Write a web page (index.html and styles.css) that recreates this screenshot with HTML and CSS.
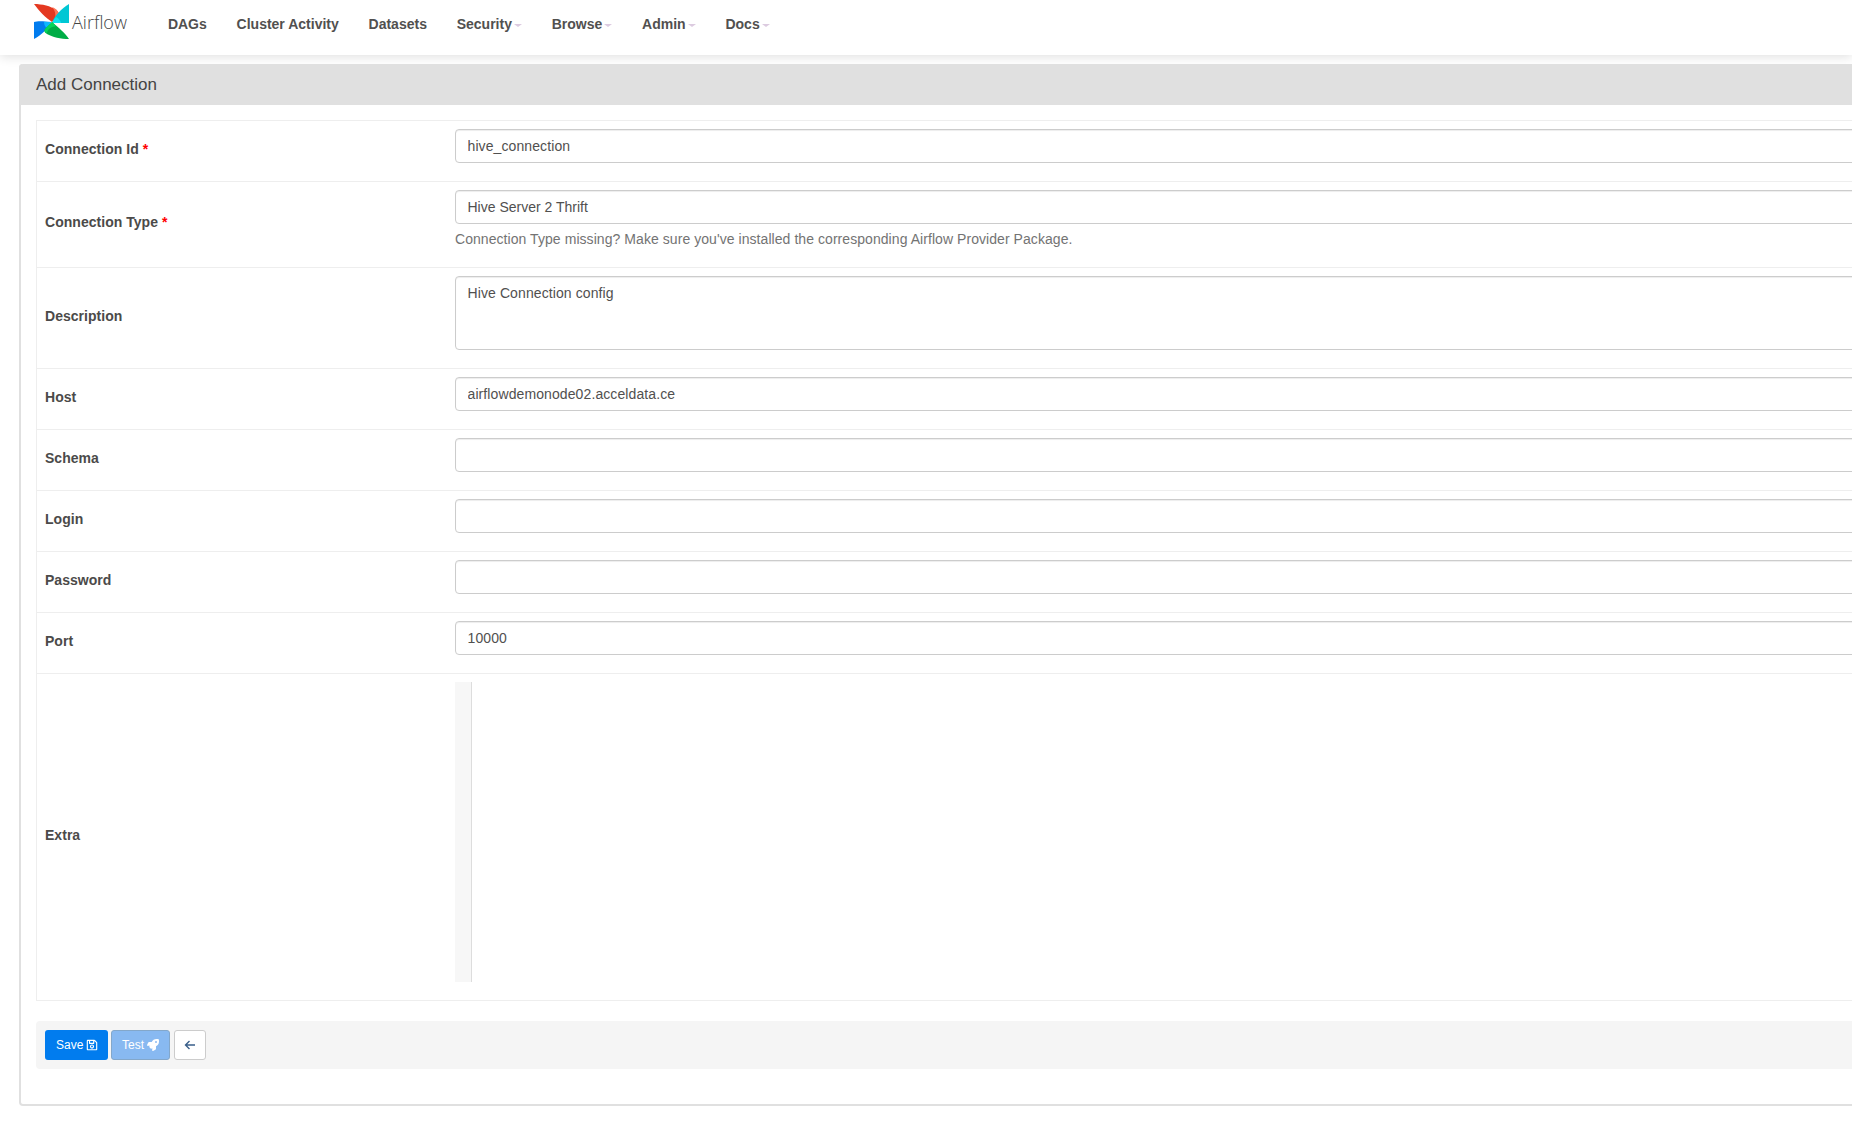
FILE: index.html
```html
<!DOCTYPE html>
<html lang="en">
<head>
    <meta charset="UTF-8">
    <title>Airflow - Add Connection</title>
    <link rel="stylesheet" href="styles.css">
</head>
<body>
    <nav class="navbar">
        <a class="brand" href="#">
            <svg class="brand-logo" viewBox="0 0 36 36" width="36" height="36">
                <path fill="#e43921" d="M0 0 C8 0 17 2 22 6 C25 8 25 10 25 11 L18 18 C12 14 5 7 0 0Z"/>
                <path fill="#ff7557" d="M18 3 C23 5 25 8 25 11 L21 15 C22 10 21 6 18 3Z"/>
                <path fill="#00c7d4" d="M35 0 L35 19 L18 19 C20 12 28 4 35 0Z"/>
                <path fill="#11e1ee" d="M18 19 L27 19 C27 17 24 14 22 13 C20 15 19 17 18 19Z"/>
                <path fill="#017cee" d="M0 35 L0 18 C3 17 9 17 17 18 C14 25 7 31 0 35Z"/>
                <path fill="#0cb6ff" d="M10 18 L17 18 C16 21 14 23 13 24 C11 23 10 20 10 18Z"/>
                <path fill="#00ad46" d="M35 35 C27 35 18 33 13 30 C10 28 10 27 11 25 L18 18 C24 23 31 29 35 35Z"/>
                <path fill="#04d659" d="M11 25 L18 18 C20 20 21 21 22 22 C18 23 14 24 13 29 C11 28 10 27 11 25Z"/>
            </svg>
            <span class="brand-name">Airflow</span>
        </a>
        <ul class="nav-links">
            <li><a href="#">DAGs</a></li>
            <li><a href="#">Cluster Activity</a></li>
            <li><a href="#">Datasets</a></li>
            <li><a href="#">Security<span class="caret"></span></a></li>
            <li><a href="#">Browse<span class="caret"></span></a></li>
            <li><a href="#">Admin<span class="caret"></span></a></li>
            <li><a href="#">Docs<span class="caret"></span></a></li>
        </ul>
    </nav>

    <div class="panel">
        <div class="panel-heading">Add Connection</div>
        <div class="panel-body">
            <form class="form-table">
                <div class="form-row">
                    <label for="conn_id">Connection Id <span class="required">*</span></label>
                    <div class="field"><input type="text" id="conn_id" value="hive_connection"></div>
                </div>
                <div class="form-row">
                    <label>Connection Type <span class="required">*</span></label>
                    <div class="field">
                        <div class="select-box">Hive Server 2 Thrift</div>
                        <p class="help-text">Connection Type missing? Make sure you've installed the corresponding Airflow Provider Package.</p>
                    </div>
                </div>
                <div class="form-row">
                    <label for="description">Description</label>
                    <div class="field"><textarea id="description">Hive Connection config</textarea></div>
                </div>
                <div class="form-row">
                    <label for="host">Host</label>
                    <div class="field"><input type="text" id="host" value="airflowdemonode02.acceldata.ce"></div>
                </div>
                <div class="form-row">
                    <label for="schema">Schema</label>
                    <div class="field"><input type="text" id="schema"></div>
                </div>
                <div class="form-row">
                    <label for="login">Login</label>
                    <div class="field"><input type="text" id="login"></div>
                </div>
                <div class="form-row">
                    <label for="password">Password</label>
                    <div class="field"><input type="password" id="password"></div>
                </div>
                <div class="form-row">
                    <label for="port">Port</label>
                    <div class="field"><input type="text" id="port" value="10000"></div>
                </div>
                <div class="form-row">
                    <label>Extra</label>
                    <div class="field"><div class="code-editor"><div class="gutter"></div></div></div>
                </div>
            </form>

            <div class="well">
                <button type="button" class="btn btn-primary">Save
                    <svg class="icon" viewBox="0 0 448 512"><path d="M433.941 129.941l-83.882-83.882A48 48 0 0 0 316.118 32H48C21.49 32 0 53.49 0 80v352c0 26.51 21.49 48 48 48h352c26.51 0 48-21.49 48-48V163.882a48 48 0 0 0-14.059-33.941zM272 80v80H144V80h128zm122 352H54a6 6 0 0 1-6-6V86a6 6 0 0 1 6-6h42v104c0 13.255 10.745 24 24 24h176c13.255 0 24-10.745 24-24V83.882l78.243 78.243a6 6 0 0 1 1.757 4.243V426a6 6 0 0 1-6 6zM224 232c-48.523 0-88 39.477-88 88s39.477 88 88 88 88-39.477 88-88-39.477-88-88-88zm0 128c-22.056 0-40-17.944-40-40s17.944-40 40-40 40 17.944 40 40-17.944 40-40 40z"/></svg>
                </button>
                <button type="button" class="btn btn-test">Test
                    <svg class="icon" viewBox="0 0 512 512"><path d="M505.12 19.09c-1.19-5.53-6.66-11-12.21-12.18C460.72 0 435.51 0 410.41 0 307.18 0 245.27 55.2 199.05 128H94.84c-16.35.02-35.56 11.88-42.89 26.48L2.52 253.3A28.4 28.4 0 0 0 0 264a24 24 0 0 0 24 24h103.82l-22.48 22.47c-11.36 11.36-13 32.26 0 45.25l50.91 50.91c11.16 11.19 32.16 13.16 45.28 0l22.47-22.47V488a24 24 0 0 0 24 24 28.56 28.56 0 0 0 10.71-2.52l98.73-49.39c14.63-7.3 26.51-26.5 26.51-42.86V312.8c72.6-46.31 128.03-108.41 128.03-211.1C512.08 76.5 512.08 51.3 505.12 19.09zM384.04 168a40 40 0 1 1 40.01-40 40.02 40.02 0 0 1-40.01 40z"/></svg>
                </button>
                <a class="btn btn-back" href="#">
                    <svg class="icon-back" viewBox="0 0 12 12"><path d="M11 6H1.5M5.5 2 1.5 6l4 4" fill="none" stroke="currentColor" stroke-width="1.4"/></svg>
                </a>
            </div>
        </div>
    </div>
</body>
</html>
```
FILE: styles.css
```css
html, body {
    overflow: hidden;
}
body {
    margin: 0;
    height: 1136px;
    background: white;
    font-family: 'Liberation Sans', Arial, sans-serif;
    font-size: 14px;
    color: #51504f;
}
a {
    color: inherit;
    text-decoration: none;
}

/* top nav */
.navbar {
    display: flex;
    height: 55px;
    background: white;
    box-shadow: 0 2px 10px rgba(0, 0, 0, 0.12);
}
.brand {
    display: flex;
    width: 153px;
    padding-left: 34px;
    box-sizing: border-box;
    flex: none;
}
.brand-logo {
    margin-top: 4px;
    flex: none;
}
.brand-name {
    margin-left: 2px;
    margin-top: 10px;
    font-family: 'Open Sans', sans-serif;
    font-size: 18px;
    line-height: 24px;
    font-weight: 300;
    color: #444;
}
.nav-links {
    display: flex;
    margin: 0;
    padding: 0;
    list-style: none;
}
.nav-links a {
    display: block;
    padding: 0 14.9px;
    line-height: 48px;
    font-weight: bold;
}
.caret {
    display: inline-block;
    width: 0;
    height: 0;
    margin-left: 2px;
    vertical-align: middle;
    border-top: 3px solid #dccbe0;
    border-left: 4px solid transparent;
    border-right: 4px solid transparent;
}

/* panel */
.panel {
    width: 2200px;
    margin: 9px 0 0 19px;
    border: 2px solid #e0e0e0;
    border-top: 0;
    border-radius: 4px;
    box-sizing: border-box;
}
.panel-heading {
    height: 41px;
    margin: 0 -2px;
    padding-left: 17px;
    background: #e0e0e0;
    border-radius: 4px 4px 0 0;
    font-size: 17px;
    line-height: 42px;
    color: #444;
}
.panel-body {
    padding: 15px 15px 35px;
}

/* form rows */
.form-table {
    border: 1px solid #eee;
    border-width: 0 0 1px 1px;
}
.form-row {
    display: flex;
    align-items: center;
    padding: 8px;
    border-top: 1px solid #eee;
}
.form-row label {
    width: 410px;
    flex: none;
    margin-bottom: 5px;
    font-weight: bold;
    letter-spacing: 0.03px;
    color: #4b4a49;
}
.required {
    color: #f00;
}
.field {
    flex: 1;
    min-width: 0;
}
input, textarea, .select-box {
    display: block;
    width: 100%;
    height: 34px;
    margin-bottom: 10px;
    padding: 6px 12px 6px 11.5px;
    box-sizing: border-box;
    background: white;
    border: 1px solid #ccc;
    border-radius: 4px;
    box-shadow: inset 0 1px 1px rgba(0, 0, 0, 0.075);
    font-family: inherit;
    font-size: 14px;
    line-height: 20px;
    letter-spacing: 0.1px;
    color: #51504f;
}
.select-box {
    letter-spacing: 0;
}
textarea {
    height: 74px;
    resize: none;
}
.help-text {
    margin: -5px 0 10px;
    line-height: 20px;
    letter-spacing: 0.06px;
    color: #737373;
}
.code-editor {
    height: 300px;
    margin-bottom: 10px;
}
.gutter {
    width: 17px;
    height: 100%;
    box-sizing: border-box;
    background: #f7f7f7;
    border-right: 1px solid #ddd;
}

/* footer buttons */
.well {
    display: flex;
    align-items: center;
    gap: 3px;
    margin-top: 20px;
    padding: 9px;
    background: #f5f5f5;
    border-radius: 4px;
}
.btn {
    display: flex;
    align-items: center;
    gap: 3px;
    height: 30px;
    padding: 0 0 0 10px;
    box-sizing: border-box;
    border: 1px solid transparent;
    border-radius: 3px;
    font-family: inherit;
    font-size: 12px;
    color: white;
}
.btn-primary {
    width: 63px;
    background: #017cee;
}
.btn-test {
    width: 59px;
    background: #88b9f1;
    border-color: #83a7ca;
}
.btn-back {
    justify-content: center;
    width: 32px;
    margin-left: 1px;
    padding: 0;
    background: white;
    border-color: #ccc;
    color: #3a5f8a;
}
.icon {
    width: 12px;
    height: 12px;
    fill: white;
}
.icon-back {
    width: 12px;
    height: 12px;
}
```
